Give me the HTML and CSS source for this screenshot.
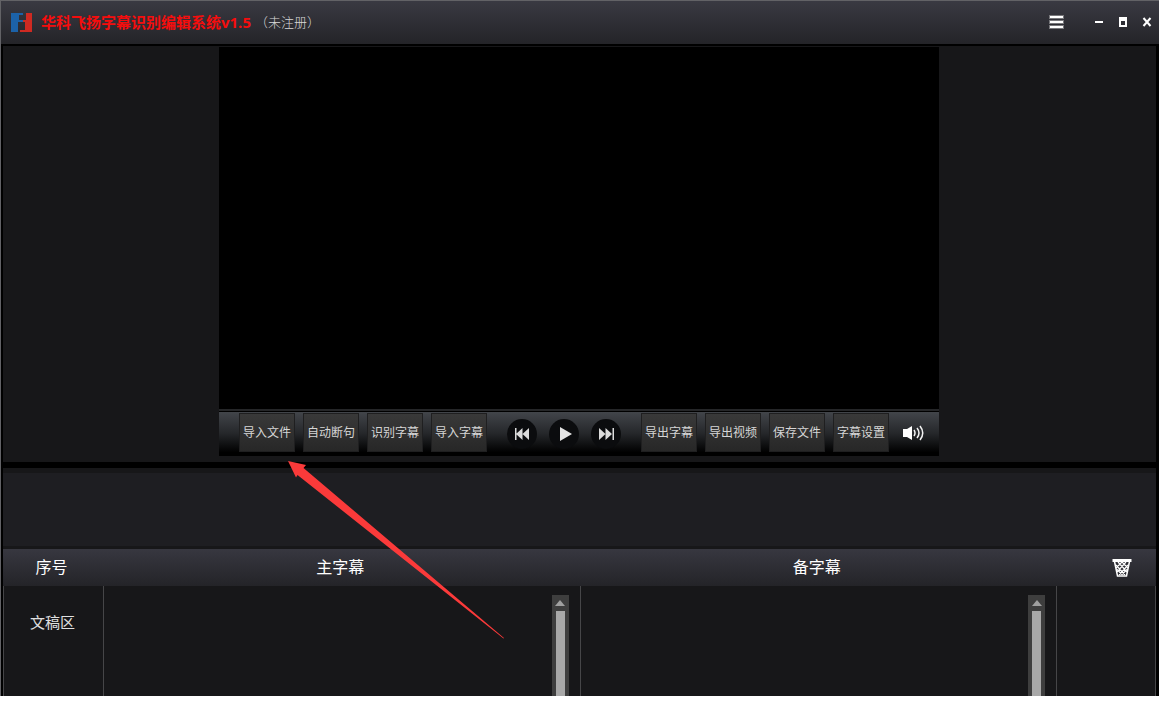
FILE: index.html
```html
<!DOCTYPE html>
<html lang="zh-CN">

<head>
    <meta charset="UTF-8">
    <meta name="viewport" content="width=device-width, initial-scale=1.0">
    <title>华科飞扬字幕识别编辑系统</title>
    <link rel="stylesheet" href="styles.css">
</head>

<body>
    <div class="app">
        <header class="titlebar">
            <svg class="logo" width="22" height="20" viewBox="0 0 22 20">
                <path fill="#1c62a8" d="M0 1h12v2H8v5h4v2H7v10H0z" />
                <path fill="#cf2a22" d="M15 1h6v19H9v-2h5v-8h-2V8h3z" />
            </svg>
            <h1 class="title">华科飞扬字幕识别编辑系统v1.5</h1>
            <span class="license">（未注册）</span>
            <div class="window-buttons">
                <button class="win-btn menu-btn" aria-label="菜单">
                    <svg width="16" height="16" viewBox="0 0 16 16">
                        <path fill="#77777b" d="M0 1h15v4H0zM0 6h15v4H0zM0 11h15v4H0z" />
                        <path fill="#fff" d="M1 2h13v2H1zM1 7h13v2H1zM1 12h13v2H1z" />
                    </svg>
                </button>
                <button class="win-btn" aria-label="最小化">
                    <svg width="10" height="10" viewBox="0 0 10 10"><path fill="#fff" d="M1 4h8v2H1z" /></svg>
                </button>
                <button class="win-btn" aria-label="最大化">
                    <svg width="10" height="10" viewBox="0 0 10 10"><path fill="#fff" fill-rule="evenodd" d="M1 0h8v10H1zM3 4v4h4V4z" /></svg>
                </button>
                <button class="win-btn" aria-label="关闭">
                    <svg width="10" height="10" viewBox="0 0 10 10"><path stroke="#fff" stroke-width="2" d="M1.500 1l7 8M8.500 1l-7 8" /></svg>
                </button>
            </div>
        </header>

        <main class="workspace">
            <section class="player-panel">
                <div class="stage">
                    <div class="video"></div>
                    <div class="toolbar">
                        <div class="tool-group">
                            <button class="tool">导入文件</button>
                            <button class="tool">自动断句</button>
                            <button class="tool">识别字幕</button>
                            <button class="tool">导入字幕</button>
                        </div>
                        <div class="play-group">
                            <button class="round" aria-label="上一个">
                                <svg width="30" height="30" viewBox="0 0 30 30"><path fill="#dcdcdc" d="M8 9h1.500v12H8zM15.500 9v12L9 15zM22 9v12l-6.500-6z" /></svg>
                            </button>
                            <button class="round" aria-label="播放">
                                <svg width="30" height="30" viewBox="0 0 30 30"><path fill="#e4e4e4" d="M11 8l12 7-12 7z" /></svg>
                            </button>
                            <button class="round" aria-label="下一个">
                                <svg width="30" height="30" viewBox="0 0 30 30"><path fill="#dcdcdc" d="M8 9l6.500 6L8 21zM14.500 9l6.500 6-6.500 6zM21.500 9H23v12h-1.500z" /></svg>
                            </button>
                        </div>
                        <div class="tool-group">
                            <button class="tool">导出字幕</button>
                            <button class="tool">导出视频</button>
                            <button class="tool">保存文件</button>
                            <button class="tool">字幕设置</button>
                        </div>
                        <button class="volume" aria-label="音量">
                            <svg width="22" height="18" viewBox="0 0 22 18">
                                <path fill="#fff" d="M0 5h4l5-3v14l-5-3H0z" />
                                <path fill="none" stroke="#f2f2f2" stroke-width="1.500" d="M11 6q2 3 0 6M14 4q4 5 0 10M17 2q5.500 7 0 14" />
                            </svg>
                        </button>
                    </div>
                    <!-- 指向“导入文件”的箭头 -->
                    <svg class="pointer" width="218" height="180" viewBox="0 0 218 180">
                        <path fill="#fb3a3a" d="M0 0L18 4L15.500 7L216 177L215.500 177.500L9.500 14L8 16.500z" />
                    </svg>
                </div>
            </section>

            <section class="timeline"></section>

            <table class="subtitles">
                <thead>
                    <tr>
                        <th class="col-no">序号</th>
                        <th>主字幕</th>
                        <th>备字幕</th>
                        <th class="col-del">
                            <button class="trash" aria-label="删除">
                                <svg width="20" height="20" viewBox="0 0 20 20">
                                    <path fill="none" stroke="#fff" stroke-width="1.500" d="M2.500 3.500l3 14.500h9l3-14.500" />
                                    <path fill="#fff" d="M0.500 1h19v3h-19z" />
                                    <path stroke="#fff" stroke-width="1.200" d="M4 7l9 10M6 4l9 10M10 4l6 6M4.500 11l6 6M16 7l-9 10M14 4L5 14M10 4L4 10M15.500 11l-6 6" />
                                </svg>
                            </button>
                        </th>
                    </tr>
                </thead>
                <tbody>
                    <tr>
                        <td class="row-name">文稿区</td>
                        <td>
                            <div class="editor">
                                <textarea class="text" aria-label="主字幕"></textarea>
                                <div class="scrollbar"><i class="scroll-up"></i><i class="scroll-thumb"></i></div>
                            </div>
                        </td>
                        <td>
                            <div class="editor">
                                <textarea class="text" aria-label="备字幕"></textarea>
                                <div class="scrollbar"><i class="scroll-up"></i><i class="scroll-thumb"></i></div>
                            </div>
                        </td>
                        <td></td>
                    </tr>
                </tbody>
            </table>
        </main>
    </div>
</body>

</html>
```

FILE: styles.css
```css
* {
    box-sizing: border-box;
}

body {
    margin: 0;
    background: #fff;
    color: #fff;
    font-family: "Open Sans", "Noto Sans CJK SC", sans-serif;
}

button {
    padding: 0;
    border: 0;
    background: none;
    color: inherit;
    font-family: inherit;
}

svg {
    display: block;
}

.app {
    margin-right: 1px;
    border-top: 1px solid #626266;
    border-left: 1px solid #626266;
    background: #000;
}

/* 标题栏 */
.titlebar {
    display: flex;
    align-items: center;
    height: 43px;
    padding: 0 7px 2px 10px;
    background: linear-gradient(#393942, #242428);
}

.title {
    margin: 0 0 0 8px;
    color: #f50d0d;
    font-size: 15px;
    line-height: 20px;
    font-weight: bold;
}

.license {
    margin-left: 4px;
    color: #d8d8d8;
    font-size: 13px;
    line-height: 20px;
    font-weight: 300;
}

.window-buttons {
    display: flex;
    align-items: center;
    gap: 14px;
    margin-left: auto;
}

.menu-btn {
    margin-right: 15px;
}

/* 播放区 */
.workspace {
    padding: 2px 3px 0 2px;
}

.player-panel {
    padding: 1px 1px 6px 0;
    background: #171719;
}

.stage {
    position: relative;
    width: 720px;
    margin: 0 auto;
}

.video {
    height: 362px;
    background: #000;
}

.toolbar {
    display: flex;
    align-items: center;
    height: 47px;
    padding: 0 0 2px 20px;
    border-top: 2px solid #252628;
    background: linear-gradient(#000 1px, #42454a 1px, #25272a 50%, #000 92%);
}

.tool-group {
    display: flex;
    gap: 8px;
}

.tool {
    width: 56px;
    height: 39px;
    border: 1px solid #1f1f20;
    background: linear-gradient(#393939, #272727);
    color: #d6d6d6;
    font-size: 12px;
    line-height: 16px;
    white-space: nowrap;
    display: flex;
    align-items: center;
    justify-content: center;
}

.play-group {
    display: flex;
    gap: 12px;
    margin: 0 20px;
    padding-top: 3px;
}

.round {
    width: 30px;
    height: 30px;
    border-radius: 50%;
    background: #0b0c0e;
}

.volume {
    margin-left: 14px;
}

.pointer {
    position: absolute;
    top: 414px;
    left: 69px;
    z-index: 2;
    pointer-events: none;
}

.timeline {
    height: 81px;
    margin-top: 6px;
    border-top: 5px solid #171719;
    border-bottom: 3px solid #171719;
    background: #1e1e22;
}

/* 字幕列表 */
.subtitles {
    width: 100%;
    table-layout: fixed;
    border-spacing: 0;
    background: #171719;
}

.subtitles thead {
    background: linear-gradient(#373740, #242428);
}

.subtitles th {
    height: 37px;
    padding: 0 4px 2px 0;
    font-size: 16px;
    line-height: 20px;
    font-weight: normal;
}

.subtitles td {
    height: 110px;
    padding: 0;
    border-right: 1px solid #464648;
    vertical-align: top;
}

.subtitles td:first-child {
    border-left: 1px solid #464648;
}

.col-no {
    width: 101px;
}

.col-del {
    width: 99px;
}

.subtitles .col-del {
    padding-bottom: 0;
}

.trash {
    display: block;
    margin: 0 auto;
    padding-left: 34px;
}

.subtitles .row-name {
    padding: 26px 2px 0 0;
    color: #e0e0e0;
    font-size: 15px;
    line-height: 20px;
    text-align: center;
}

.editor {
    display: flex;
    height: 110px;
    padding: 9px 11px 0 8px;
}

.text {
    flex: 1;
    min-width: 0;
    border: 0;
    outline: 0;
    padding: 0;
    resize: none;
    overflow: hidden;
    background: transparent;
    color: #fff;
    font-family: inherit;
    font-size: 15px;
}

.scrollbar {
    display: flex;
    flex-direction: column;
    align-items: center;
    gap: 5px;
    width: 17px;
    padding-top: 5px;
    background: #3e3e3e;
}

.scroll-up {
    border: 5px solid transparent;
    border-top: 0;
    border-bottom: 6px solid #a0a0a0;
}

.scroll-thumb {
    flex: 1;
    width: 9px;
    background: #a8a8a8;
}
```
